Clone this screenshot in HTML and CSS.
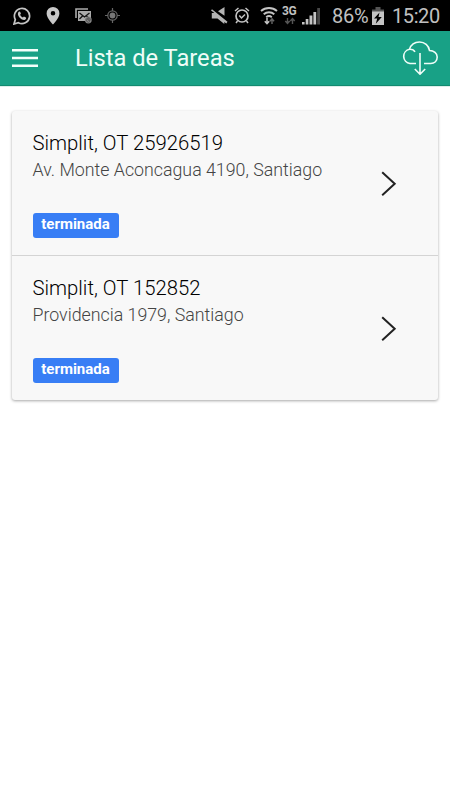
FILE: index.html
```html
<!DOCTYPE html>
<html lang="es">
<head>
	<meta charset="UTF-8">
	<title>Lista de Tareas</title>
	<link rel="stylesheet" href="styles.css">
</head>
<body>
	<div class="status-bar">
		<div class="notifications">
			<svg width="18" height="18" viewBox="0 0 18 18">
				<path d="M1 17l1.3-4.4A7.6 7.6 0 1 1 5.4 15.700z" fill="none" stroke="#c4c4c4" stroke-width="1.7"/>
				<path d="M5.300 5.200c.8-1.200 1.800-.9 2.200.3l.4 1.300-.8 1c.7 1.400 1.500 2.200 2.800 2.800l1-1 2 1c.7.500 0 2-1.400 2.300-3.400.4-8-4.400-6.200-7.700z" fill="#c4c4c4"/>
			</svg>
			<svg class="pin" width="14" height="18" viewBox="0 0 14 18">
				<path d="M7 0a6.400 6.400 0 0 0-6.400 6.400C.6 11 7 17.500 7 17.500S13.400 11 13.400 6.400A6.400 6.400 0 0 0 7 0zm0 4a2.300 2.300 0 1 1 0 4.600A2.300 2.300 0 0 1 7 4z" fill="#c8c8c8"/>
			</svg>
			<svg class="mail" width="17" height="16" viewBox="0 0 17 16">
				<path d="M1 10V1h12" fill="none" stroke="#aaa" stroke-width="1.600"/>
				<path d="M3 3h13v10H3z" fill="#aaa"/>
				<path d="M4.500 5l5 4 5-4M4.500 11l3-3M14.500 11l-3-3" fill="none" stroke="#111" stroke-width="1.300"/>
				<circle cx="13.300" cy="12" r="3.400" fill="#888"/>
				<path d="M15 13.500a2.200 2.200 0 1 1 .2-2.800v1.700h-1.300v-1.600a.8.8 0 1 0 0 1" fill="none" stroke="#444" stroke-width=".7"/>
			</svg>
			<svg class="gps" width="15" height="15" viewBox="0 0 15 15">
				<circle cx="7.500" cy="7.500" r="4.700" fill="none" stroke="#666" stroke-width="1.200"/>
				<circle cx="7.500" cy="7.500" r="2.900" fill="#777"/>
				<path d="M7.500 0v3M7.500 12v3M0 7.500h3M12 7.500h3" stroke="#666" stroke-width="1.200"/>
			</svg>
		</div>
		<div class="system">
			<svg width="17" height="17" viewBox="0 0 17 17">
				<path d="M7 4.200L13.500 0v8.800z" fill="#b4b4b4"/>
				<path d="M1 2.200l15.500 12.500-1.200 1.700-2-1.500v2L6.500 11.500H.8V6h2.600L0 3.500z" fill="#b4b4b4"/>
			</svg>
			<svg class="alarm" width="16" height="17" viewBox="0 0 16 17">
				<circle cx="8" cy="9" r="6" fill="none" stroke="#c4c4c4" stroke-width="1.700"/>
				<path d="M1 4l3.500-3M15 4l-3.500-3M3.500 14L2 16M12.500 14l1.500 2M5.300 8.500L7.500 11l3.500-3.500" fill="none" stroke="#c4c4c4" stroke-width="1.500"/>
			</svg>
			<svg class="wifi" width="18" height="19" viewBox="0 0 18 19">
				<path d="M1 5a12 12 0 0 1 16 0M3.700 8.200a8 8 0 0 1 10.600 0M6.200 11.200a4.500 4.500 0 0 1 5.600 0" fill="none" stroke="#c4c4c4" stroke-width="1.900"/>
				<path d="M7 12v5M4.800 15.200L7 17.700l2.200-2.500" fill="none" stroke="#c4c4c4" stroke-width="1.500"/>
				<path d="M12 18v-5M9.900 15.300l2.100-2.400 2.100 2.400" fill="none" stroke="#666" stroke-width="1.400"/>
			</svg>
			<div class="network">
				<span>3G</span>
				<svg width="12" height="8" viewBox="0 0 12 8">
					<path d="M3.500 1v5M1.300 4l2.200 2.500L5.700 4M8.500 7V2M6.300 4l2.200-2.500L10.700 4" fill="none" stroke="#555" stroke-width="1.400"/>
				</svg>
			</div>
			<svg class="signal" width="18" height="18" viewBox="0 0 18 18">
				<path d="M0 15h2.600v2.500H0zM3.700 12h2.700v5.500H3.700zM7.500 8.500h2.900v9H7.500zM11.400 5h2.800v12.500h-2.800z" fill="#c4c4c4"/>
				<path d="M15.200 1H18v16.500h-2.800z" fill="#484848"/>
			</svg>
			<span class="percent">86%</span>
			<svg class="battery" width="12" height="18" viewBox="0 0 12 18">
				<path d="M3.500 0h5v2.500H12V5H0V2.500h3.500z" fill="#555"/>
				<path d="M0 4.500h12V18H0z" fill="#c4c4c4"/>
				<path d="M7.500 5.500L2 11.500h3.200L3.800 16.800l6-6.800H6.500z" fill="#000"/>
			</svg>
			<span class="clock">15:20</span>
		</div>
	</div>

	<div class="header">
		<svg class="menu" width="26" height="20" viewBox="0 0 26 20">
			<path d="M0 2.300h26M0 10h26M0 17.700h26" stroke="#f4fffb" stroke-width="2.500"/>
		</svg>
		<h1>Lista de Tareas</h1>
		<svg class="download" width="36" height="34" viewBox="0 0 36 34">
			<path d="M14 22.500H8A7.200 7.200 0 0 1 7.500 8.300C9 3.500 13 1 17.500 1c5.200 0 9.300 3.500 10 8.500 4.300.1 7.700 2.700 7.700 6.500s-2.700 6.500-6.500 6.500H22M7.500 8.300c2.500-.2 4.500.8 5.500 2.500M18 12v21M12.800 28l5.200 5.200 5.200-5.200" fill="none" stroke="#effdf8" stroke-width="1.600"/>
		</svg>
	</div>

	<div class="card">
		<div class="item">
			<div class="info">
				<h2>Simplit, OT 25926519</h2>
				<p>Av. Monte Aconcagua 4190, Santiago</p>
				<span class="badge">terminada</span>
			</div>
			<svg class="arrow" width="16" height="26" viewBox="0 0 16 26">
				<path d="M1.200 1.200L13.700 12.700 1.200 24.200" fill="none" stroke="#222" stroke-width="2"/>
			</svg>
		</div>
		<div class="item">
			<div class="info">
				<h2>Simplit, OT 152852</h2>
				<p>Providencia 1979, Santiago</p>
				<span class="badge">terminada</span>
			</div>
			<svg class="arrow" width="16" height="26" viewBox="0 0 16 26">
				<path d="M1.200 1.200L13.700 12.700 1.200 24.200" fill="none" stroke="#222" stroke-width="2"/>
			</svg>
		</div>
	</div>
</body>
</html>
```

FILE: styles.css
```css
* {
	margin: 0;
	padding: 0;
	box-sizing: border-box;
}
body {
	min-height: 100vh;
	background-color: #fff;
	font-family: Roboto, "Liberation Sans", sans-serif;
}
svg {
	display: block;
	flex: none;
}

/* status bar */
.status-bar {
	display: flex;
	justify-content: space-between;
	height: 31px;
	padding: 0 10px 0 13px;
	background-color: #000;
	color: #c0c0c0;
}
.notifications,
.system {
	display: flex;
	align-items: center;
}
.pin {
	margin-left: 15px;
}
.mail {
	margin-left: 15px;
}
.gps {
	margin-left: 13px;
}
.alarm {
	margin-left: 6px;
}
.wifi {
	margin-left: 10px;
}
.network {
	width: 16px;
	margin-left: 4px;
	font-size: 12px;
	font-weight: bold;
	letter-spacing: -.5px;
	line-height: 10px;
}
.network span {
	display: block;
}
.network svg {
	margin: 1px 0 0 2px;
}
.signal {
	margin-left: 4px;
}
.percent {
	width: 37px;
	margin-left: 12px;
	font-size: 20px;
	letter-spacing: -.3px;
}
.battery {
	margin-left: 3px;
}
.clock {
	width: 48px;
	margin-left: 8px;
	font-size: 20px;
	letter-spacing: -.4px;
}

/* header */
.header {
	display: flex;
	align-items: center;
	height: 55px;
	padding: 0 12px;
	background-color: #18a186;
	border-bottom: 1px solid #128a70;
	box-shadow: 0 1px 0 #dceeea;
}
.header h1 {
	flex: 1;
	margin-left: 37px;
	color: #effdf8;
	font-size: 23.7px;
	font-weight: normal;
}

/* task list */
.card {
	margin: 25px 12px 0;
	background-color: #f8f8f8;
	border-radius: 3px;
	box-shadow: 0 1px 3px rgba(0, 0, 0, .35);
}
.item {
	display: flex;
	align-items: center;
	justify-content: space-between;
	height: 145px;
	padding: 2px 41px 0 20.5px;
	border-bottom: 1px solid #d4d4d4;
}
.item:last-child {
	height: 144px;
	border-bottom: 0;
}
.item h2 {
	margin-bottom: 1px;
	color: #000;
	font-size: 20.3px;
	font-weight: 300;
	line-height: 26px;
}
.item p {
	color: #444;
	font-size: 17.8px;
	font-weight: 300;
	line-height: 26px;
}
.badge {
	display: block;
	width: 86px;
	height: 25px;
	margin-top: 30px;
	border-radius: 3px;
	background-color: #387ef5;
	color: #fff;
	font-size: 15px;
	font-weight: bold;
	line-height: 23px;
	text-align: center;
}
```
